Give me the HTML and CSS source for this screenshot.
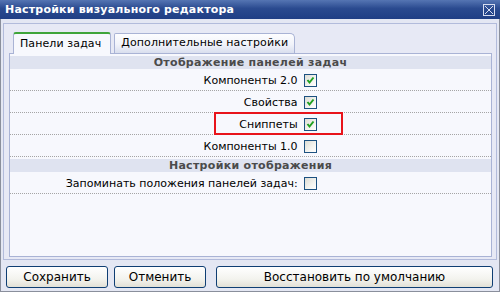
FILE: index.html
```html
<!doctype html>
<html>
  <head>
    <meta charset="utf-8">
    <title>Настройки визуального редактора</title>
    <link rel="stylesheet" href="styles.css">
  </head>
  <body>
    <div class="dialog">
      <div class="titlebar">
        <span class="title">Настройки визуального редактора</span>
        <span class="close">
          <svg width="12" height="12" viewBox="0 0 12 12">
            <rect x="0.5" y="0.5" width="11" height="11" fill="none" stroke="#d6dcef"/>
            <path d="M2 2 L10 10 M10 2 L2 10" stroke="#d6dcef" stroke-width="1"/>
          </svg>
        </span>
      </div>

      <div class="frame">
        <div class="tabs">
          <div class="tab active">Панели задач</div>
          <div class="tab">Дополнительные настройки</div>
        </div>
        <div class="panel">
          <div class="section">Отображение панелей задач</div>
          <div class="row">
            <span class="label">Компоненты 2.0</span>
            <span class="check on"></span>
          </div>
          <div class="row">
            <span class="label">Свойства</span>
            <span class="check on"></span>
          </div>
          <div class="row">
            <span class="label">Сниппеты</span>
            <span class="check on"></span>
            <span class="highlight"></span>
          </div>
          <div class="row">
            <span class="label">Компоненты 1.0</span>
            <span class="check"></span>
          </div>
          <div class="section second">Настройки отображения</div>
          <div class="row">
            <span class="label">Запоминать положения панелей задач:</span>
            <span class="check"></span>
          </div>
        </div>
      </div>

      <div class="buttons">
        <button class="btn save">Сохранить</button>
        <button class="btn cancel">Отменить</button>
        <button class="btn reset">Восстановить по умолчанию</button>
      </div>
    </div>
  </body>
</html>
```

FILE: styles.css
```css
body {
  margin: 0;
  padding: 0;
  font-family: "DejaVu Sans", Verdana, sans-serif;
  font-size: 11px;
  color: #000;
}
.dialog {
  box-sizing: border-box;
  width: 500px;
  height: 292px;
  border: 1px solid #8a8f9c;
  border-top: 0;
  background-color: #e4e7f3;
}
.titlebar {
  display: flex;
  align-items: center;
  justify-content: space-between;
  height: 19px;
  margin: 0 -1px;
  padding: 0 5px 0 5px;
  background: linear-gradient(#5575b3, #2a4a8f 45%, #1f3e85);
  color: #fff;
}
.title {
  font-weight: bold;
  font-size: 11px;
  letter-spacing: 0.2px;
}
.close {
  display: flex;
  margin-top: 1px;
}
.close svg {
  display: block;
}
.frame {
  margin: 4px 2px 0 2px;
  padding: 8px 4px 2px 5px;
  border: 1px solid #b2bbdb;
  background-color: #e7e9f5;
}
.tabs {
  display: flex;
  align-items: flex-end;
  padding-left: 4px;
  height: 21px;
}
.tab {
  box-sizing: border-box;
  height: 20px;
  line-height: 18px;
  padding: 0 6px 0 6px;
  margin-right: 3px;
  border: 1px solid #a9b3d5;
  border-bottom: 0;
  border-radius: 2px 5px 0 0;
  background: linear-gradient(#fdfdff, #f1f3fa 55%, #d9deee);
  letter-spacing: 0.1px;
}
.tab.active {
  height: 22px;
  line-height: 20px;
  margin-bottom: -1px;
  padding: 0 9px 0 6px;
  border-top: 2px solid #3fa53a;
  border-radius: 3px 3px 0 0;
  background: #f7f8fd;
  position: relative;
}
.panel {
  box-sizing: border-box;
  height: 204px;
  padding-top: 2px;
  border: 1px solid #a9b3d5;
  background-color: #f7f8fd;
}
.section {
  height: 13px;
  line-height: 13px;
  text-align: center;
  font-weight: bold;
  color: #4b4b4b;
  background-color: #dfe3f0;
  letter-spacing: 0.3px;
}
.section.second {
  margin-top: 2px;
}
.row {
  position: relative;
  display: flex;
  align-items: center;
  box-sizing: border-box;
  height: 22px;
  padding-top: 1px;
  border-bottom: 1px dotted #a5a5a5;
}
.label {
  box-sizing: border-box;
  width: 60%;
  padding-right: 1px;
  text-align: right;
}
.check {
  box-sizing: border-box;
  width: 13px;
  height: 13px;
  margin-left: 5px;
  border: 1px solid #1c5180;
  background: linear-gradient(135deg, #dcdcd4, #f4f4f0 60%, #ffffff);
}
.check.on {
  background-image: url("data:image/svg+xml,%3Csvg xmlns='http://www.w3.org/2000/svg' width='11' height='11' viewBox='0 0 11 11'%3E%3Cpath d='M2.5 5 L4.5 7.5 L8.5 2.5' fill='none' stroke='%2321a121' stroke-width='2'/%3E%3C/svg%3E"), linear-gradient(135deg, #dcdcd4, #f4f4f0 60%, #ffffff);
  background-repeat: no-repeat;
}
.highlight {
  position: absolute;
  left: 204px;
  top: -1px;
  box-sizing: border-box;
  width: 129px;
  height: 23px;
  border: 2px solid #e8141b;
}
.buttons {
  display: flex;
  padding: 6px 0 0 5px;
}
.btn {
  box-sizing: border-box;
  height: 22px;
  padding: 0;
  border: 1px solid #0f3e73;
  border-radius: 3px;
  background: linear-gradient(#ffffff, #f3f3ee 60%, #e2e0d6);
  font-family: "DejaVu Sans", Verdana, sans-serif;
  font-size: 12px;
  color: #000;
}
.save {
  width: 102px;
}
.cancel {
  width: 92px;
  margin-left: 6px;
}
.reset {
  width: 277px;
  margin-left: 10px;
}
```
